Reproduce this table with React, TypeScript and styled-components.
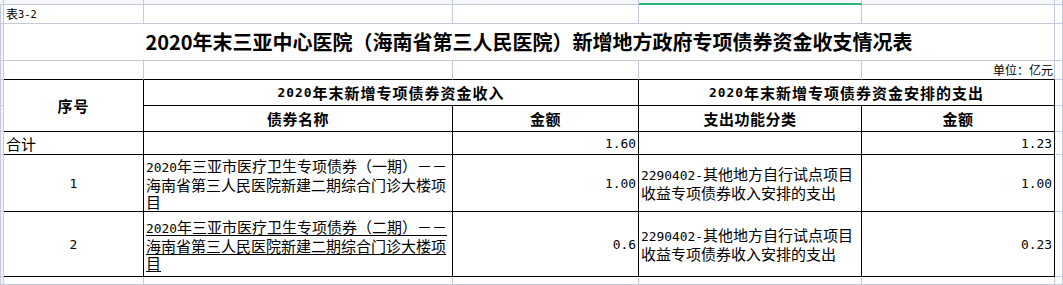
import styled, { createGlobalStyle } from "styled-components";

const GRID = "#c5cadb";
const INK = "#000";

type Edge = "grid" | "ink";
type Align = "left" | "center" | "right";

const GlobalStyle = createGlobalStyle`
  html, body {
    margin: 0;
    padding: 0;
    background: #fff;
  }
  body {
    overflow: hidden;
    color: #000;
    font-family: "Noto Sans CJK SC", "Noto Sans", sans-serif;
  }
`;

const Sheet = styled.div`
  display: grid;
  grid-template-columns: 4px 140px 309px 186px 223px 193px 1fr;
  grid-template-rows: 5px 19px 37px 19px 26px 26px 23px 57px 65px 1fr;
  width: 1063px;
  height: 285px;
  overflow: hidden;
  background: #fff;
`;

const Cell = styled.div<{
  $span?: number;
  $rows?: number;
  $right?: Edge;
  $bottom?: Edge;
  $align?: Align;
}>`
  box-sizing: border-box;
  grid-column: span ${(p) => p.$span ?? 1};
  grid-row: span ${(p) => p.$rows ?? 1};
  min-width: 0;
  display: flex;
  align-items: center;
  justify-content: ${(p) =>
    p.$align === "right" ? "flex-end" : p.$align === "center" ? "center" : "flex-start"};
  padding: 0 2px;
  border-right: 1px solid ${(p) => (p.$right === "ink" ? INK : GRID)};
  border-bottom: 1px solid ${(p) => (p.$bottom === "ink" ? INK : GRID)};
  font-size: 15px;
  line-height: 17px;
  white-space: pre;
  overflow: hidden;
`;

const Gutter = styled(Cell)`
  padding: 0;
  border-left: 1px solid ${GRID};
  background: #f4f5f9;
`;

const Strip = styled(Cell)<{ $active?: boolean }>`
  padding: 0;
  background: #f4f5f9;
  border-bottom: ${(p) => (p.$active ? "2px solid #2bb57b" : `1px solid ${GRID}`)};
`;

const Caption = styled(Cell)`
  font-size: 12px;
  line-height: 14px;
`;

const Title = styled(Cell)`
  justify-content: center;
  font-size: 20px;
  font-weight: 700;
  line-height: 1;
`;

const Unit = styled(Cell)`
  justify-content: flex-end;
  padding-right: 1px;
  font-size: 12px;
  line-height: 14px;
`;

const Box = styled(Cell).attrs({ $right: "ink" as Edge, $bottom: "ink" as Edge })``;

const Head = styled(Box)<{ $spacing?: number }>`
  justify-content: center;
  font-weight: 700;
  letter-spacing: ${(p) => p.$spacing ?? 0}px;
`;

const Amount = styled(Box)`
  justify-content: flex-end;
`;

const Serial = styled(Box)`
  justify-content: center;
`;

const Linked = styled.span`
  text-decoration: underline;
  text-underline-offset: 2px;
`;

// ascii runs in a narrow fixed-width face, like the sheet's half-width digits
const Latin = styled.span`
  font-family: "DejaVu Sans Mono", "Liberation Mono", monospace;
  font-size: 0.86em;
`;

function mixed(text: string) {
  return text
    .split(/([\x20-\x7e]+)/)
    .filter((part) => part !== "")
    .map((part, i) =>
      /^[\x20-\x7e]+$/.test(part) ? <Latin key={i}>{part}</Latin> : <span key={i}>{part}</span>
    );
}

const bondOne = "2020年三亚市医疗卫生专项债券（一期）－－\n海南省第三人民医院新建二期综合门诊大楼项\n目";
const bondTwo = "2020年三亚市医疗卫生专项债券（二期）－－\n海南省第三人民医院新建二期综合门诊大楼项\n目";
const usage = "2290402-其他地方自行试点项目\n收益专项债券收入安排的支出";

export default function App() {
  return (
    <>
      <GlobalStyle />
      <Sheet>
        {/* column header edge */}
        <Strip />
        <Strip />
        <Strip />
        <Strip />
        <Strip $active />
        <Strip />
        <Strip />

        {/* row 1 */}
        <Gutter />
        <Caption>{mixed("表3-2")}</Caption>
        <Cell />
        <Cell />
        <Cell />
        <Cell />
        <Cell />

        {/* title */}
        <Gutter />
        <Title $span={5}>2020年末三亚中心医院（海南省第三人民医院）新增地方政府专项债券资金收支情况表</Title>
        <Cell />

        {/* unit */}
        <Gutter />
        <Cell $bottom="ink" />
        <Cell $bottom="ink" />
        <Cell $bottom="ink" />
        <Cell $bottom="ink" />
        <Unit $bottom="ink">单位：亿元</Unit>
        <Cell />

        {/* header rows */}
        <Gutter />
        <Head $rows={2} $spacing={1}>序号</Head>
        <Head $span={2} $spacing={1}>{mixed("2020年末新增专项债券资金收入")}</Head>
        <Head $span={2} $spacing={1}>{mixed("2020年末新增专项债券资金安排的支出")}</Head>
        <Cell />

        <Gutter />
        <Head $spacing={0.5}>债券名称</Head>
        <Head $spacing={0.5}>金额</Head>
        <Head $spacing={0.5}>支出功能分类</Head>
        <Head $spacing={0.5}>金额</Head>
        <Cell />

        {/* total */}
        <Gutter />
        <Box>合计</Box>
        <Box />
        <Amount>{mixed("1.60")}</Amount>
        <Box />
        <Amount>{mixed("1.23")}</Amount>
        <Cell />

        {/* item 1 */}
        <Gutter />
        <Serial>{mixed("1")}</Serial>
        <Box>
          <span>{mixed(bondOne)}</span>
        </Box>
        <Amount>{mixed("1.00")}</Amount>
        <Box>
          <span>{mixed(usage)}</span>
        </Box>
        <Amount>{mixed("1.00")}</Amount>
        <Cell />

        {/* item 2 */}
        <Gutter />
        <Serial>{mixed("2")}</Serial>
        <Box>
          <Linked>{mixed(bondTwo)}</Linked>
        </Box>
        <Amount>{mixed("0.6")}</Amount>
        <Box>
          <span>{mixed(usage)}</span>
        </Box>
        <Amount>{mixed("0.23")}</Amount>
        <Cell />

        {/* empty row below */}
        <Gutter />
        <Cell />
        <Cell />
        <Cell />
        <Cell />
        <Cell />
        <Cell />
      </Sheet>
    </>
  );
}
